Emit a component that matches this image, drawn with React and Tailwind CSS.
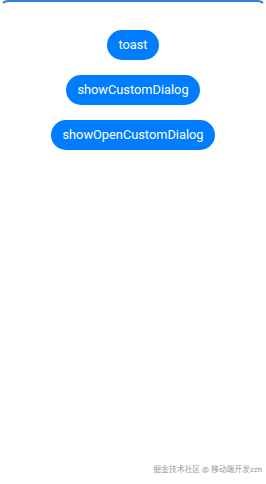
export default function App() {
  return (
    <div className="relative w-[266px] h-[484px] bg-white overflow-hidden" style={{ fontFamily: "Roboto, 'Noto Sans CJK SC', sans-serif" }}>
      <div className="absolute inset-x-0 top-0 h-[10px] border-t-2 border-x-2 border-[#2f7fd6] rounded-t-[8px] pointer-events-none" style={{ borderLeftColor: "transparent", borderRightColor: "transparent" }} />
      <div className="flex flex-col items-center gap-[15px] pt-[30px]">
        <button className="h-[30px] px-[11px] rounded-full bg-[#007dff] text-white text-[12.8px] leading-none">toast</button>
        <button className="h-[30px] px-[11px] rounded-full bg-[#007dff] text-white text-[12.8px] leading-none">showCustomDialog</button>
        <button className="h-[30px] px-[11px] rounded-full bg-[#007dff] text-white text-[12.8px] leading-none">showOpenCustomDialog</button>
      </div>
      <div className="absolute right-[4px] bottom-[10px] text-[7.8px] text-[#9a9a9a] leading-none whitespace-nowrap">掘金技术社区 @ 移动端开发zzh</div>
    </div>
  );
}
